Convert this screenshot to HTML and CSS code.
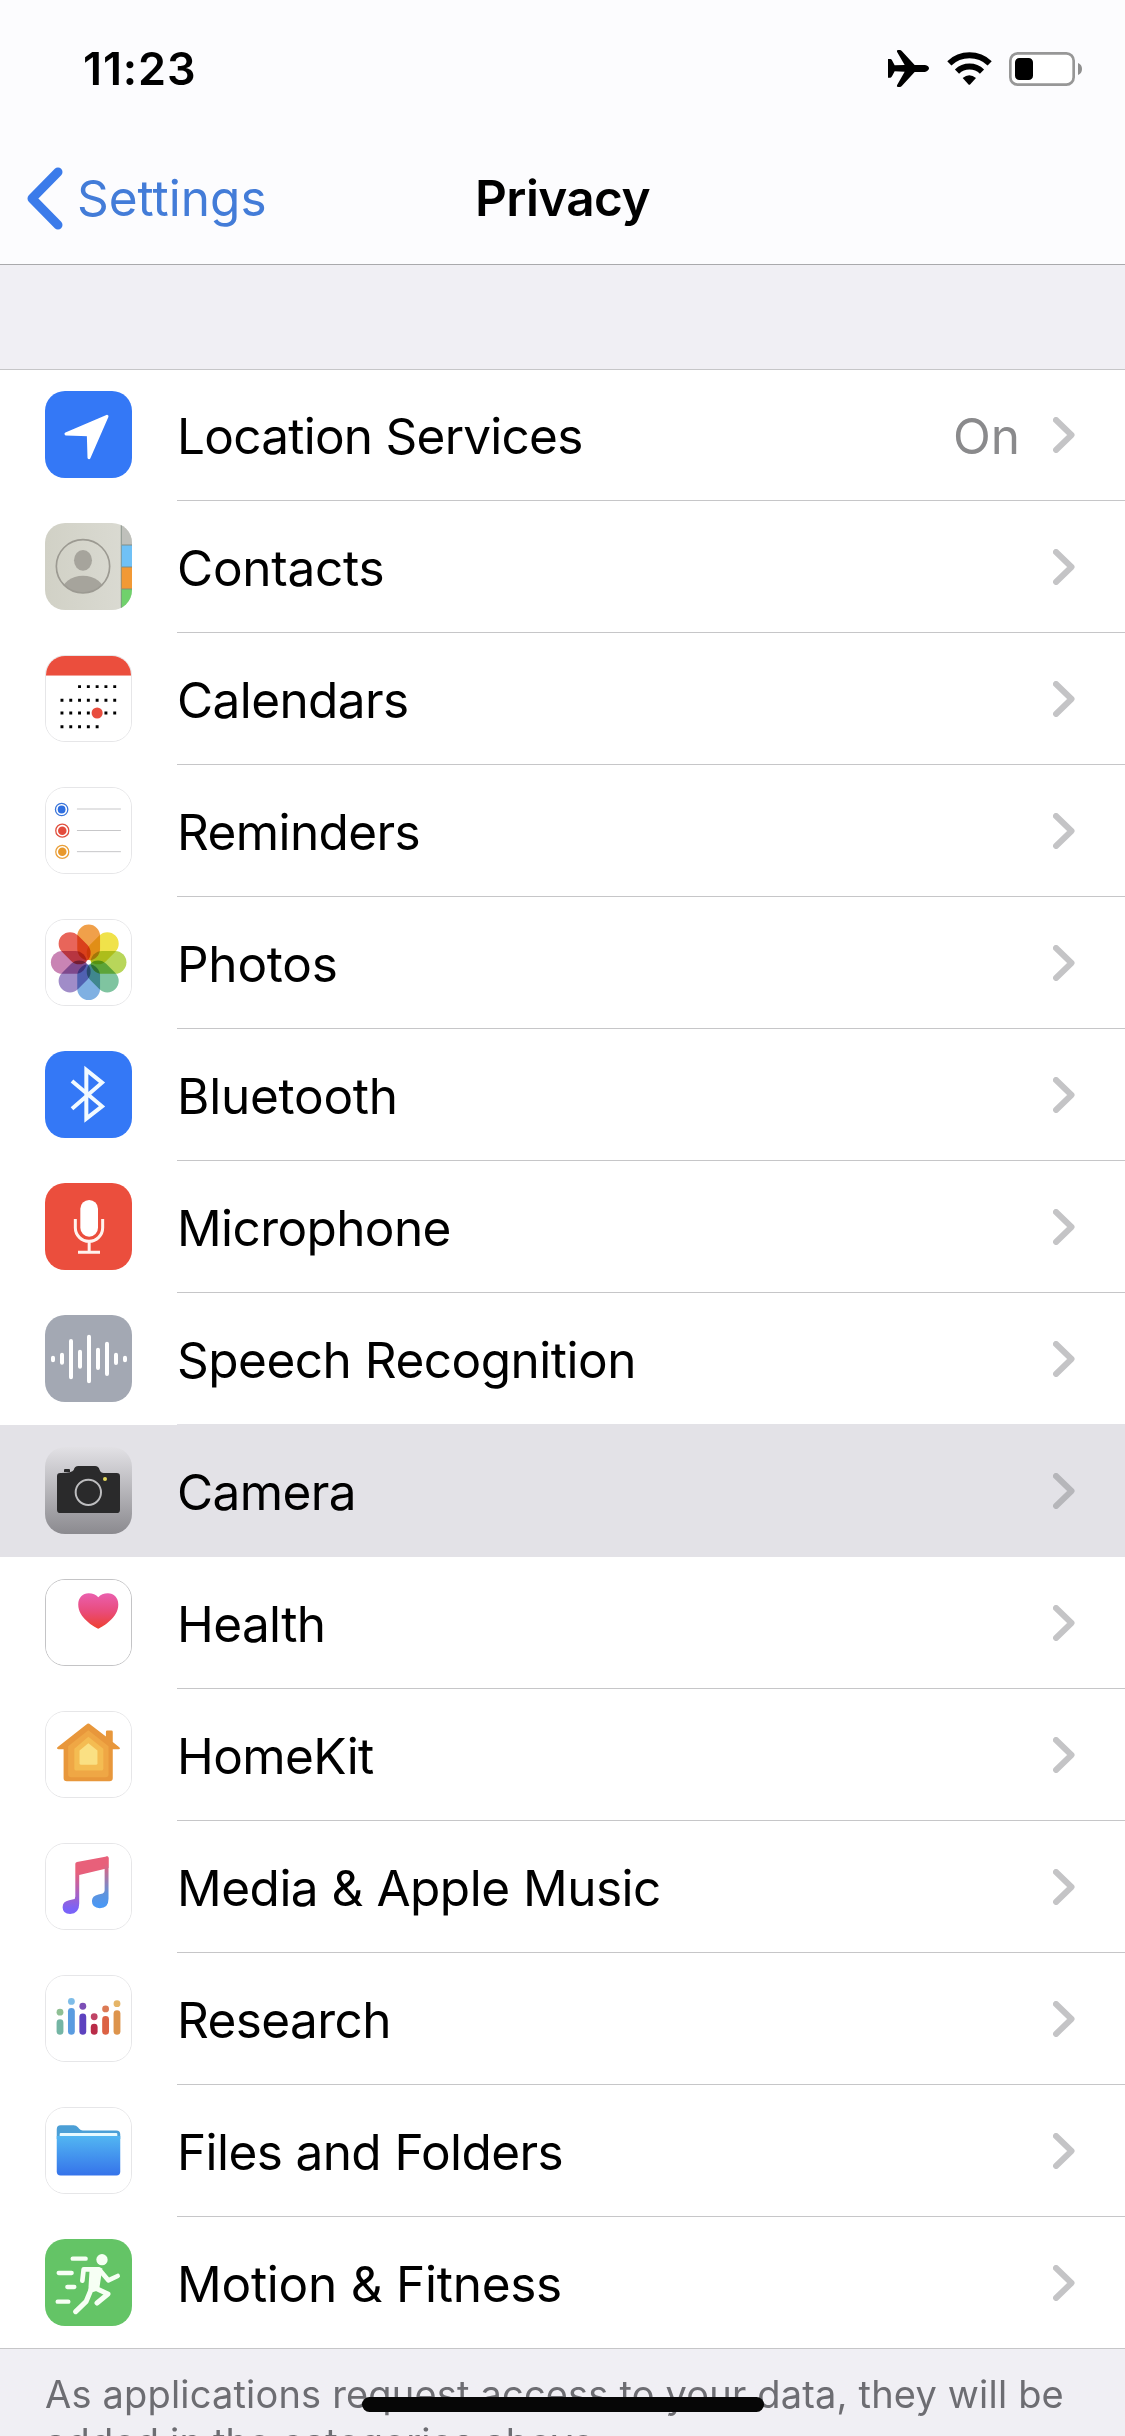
FILE: index.html
```html
<!DOCTYPE html>
<html lang="en">
<head>
  <meta charset="UTF-8">
  <meta name="viewport" content="width=device-width, initial-scale=1.0">
  <title>Privacy</title>
  <link rel="stylesheet" href="styles.css">
</head>
<body>
  <div class="screen">
    <header class="header">
      <div class="status-bar">
        <span class="status-time">11:23</span>
        <div class="status-icons">
          <svg class="airplane" viewBox="0 0 123 111">
            <path d="M0 27h7q3 0 5 4l8 15 30-1L27 5q-2-5 3-5h5q4 0 7 4l38 41h31q12 3 12 10t-12 11H80l-38 41q-3 4-7 4h-5q-5 0-3-5l23-41-30-1-8 15q-2 4-5 4H0z"/>
          </svg>
          <svg class="wifi" viewBox="0 0 135 99">
            <path class="wifi-arc" d="M7 34a88 88 0 0 1 121 0M30 59a54 54 0 0 1 75 0"/>
            <path d="M47 78q20-17 40 0L70 97q-3 3-6 0z"/>
          </svg>
          <svg class="battery" viewBox="0 0 219 102">
            <rect x="4" y="4" width="190" height="94" rx="22" fill="#fff" stroke="#979797" stroke-width="8"/>
            <rect x="18" y="18" width="54" height="66" rx="13"/>
            <path d="M207 33q12 5 12 18t-12 18z" fill="#8f8f8f"/>
          </svg>
        </div>
      </div>
      <nav class="nav-bar">
        <a class="back">
          <svg class="back-arrow" viewBox="0 0 37 63"><path d="M32 5L6 31.500L32 58"/></svg>
          <span class="back-label">Settings</span>
        </a>
        <h1 class="nav-title">Privacy</h1>
      </nav>
    </header>

    <main class="list">
      <div class="row">
        <svg class="icon" viewBox="0 0 261 261">
          <rect width="261" height="261" fill="#3478f6"/>
          <path d="M186 76L63 129 130 131.500 132 200z" fill="#fff" stroke="#fff" stroke-width="9" stroke-linejoin="round"/>
        </svg>
        <div class="cell"><span class="label label-tight">Location Services</span><span class="value">On</span><svg class="chevron" viewBox="0 0 22 36"><path d="M3 3L18.500 18L3 33"/></svg></div>
      </div>

      <div class="row">
        <svg class="icon" viewBox="0 0 261 261">
          <defs>
            <linearGradient id="paper" x1="0" y1="0" x2="1" y2="0"><stop offset="0" stop-color="#d1d1c6"/><stop offset="1" stop-color="#dbdbd3"/></linearGradient>
            <clipPath id="face"><circle cx="114" cy="130" r="80"/></clipPath>
          </defs>
          <rect width="261" height="261" fill="url(#paper)"/>
          <rect x="228" width="33" height="66" fill="#bfc0bb"/>
          <rect x="228" y="66" width="33" height="66" fill="#70c1f6"/>
          <rect x="228" y="132" width="33" height="66" fill="#f29935"/>
          <rect x="228" y="198" width="33" height="63" fill="#70d16c"/>
          <path d="M228 66h33M228 132h33M228 198h33M229 0v261" stroke="#7d8a80" stroke-opacity=".6" stroke-width="4"/>
          <g fill="#a6a49c">
            <ellipse cx="114" cy="112" rx="27" ry="31"/>
            <ellipse cx="114" cy="207" rx="64" ry="49" clip-path="url(#face)"/>
          </g>
          <circle cx="114" cy="130" r="80" fill="none" stroke="#9c9a92" stroke-width="5"/>
        </svg>
        <div class="cell"><span class="label label-wide">Contacts</span><svg class="chevron" viewBox="0 0 22 36"><path d="M3 3L18.500 18L3 33"/></svg></div>
      </div>

      <div class="row">
        <svg class="icon icon-light" viewBox="0 0 261 261">
          <rect width="261" height="261" fill="#fff"/>
          <rect width="261" height="60" fill="#eb4e3d"/>
          <path d="M98.500 94H216M44.500 136H216M44.500 175H216M44.500 217H162" stroke="#000" stroke-width="9" stroke-dasharray="9 18"/>
          <circle cx="157" cy="175" r="17" fill="#e84d3e"/>
        </svg>
        <div class="cell"><span class="label">Calendars</span><svg class="chevron" viewBox="0 0 22 36"><path d="M3 3L18.500 18L3 33"/></svg></div>
      </div>

      <div class="row">
        <svg class="icon icon-light" viewBox="0 0 261 261">
          <rect width="261" height="261" fill="#fff"/>
          <g fill="none" stroke-width="4">
            <circle cx="48" cy="66" r="19" stroke="#3a74d8"/>
            <circle cx="50" cy="131" r="20" stroke="#e0503f"/>
            <circle cx="50" cy="196" r="20" stroke="#e9a03a"/>
          </g>
          <circle cx="48" cy="66" r="12" fill="#2f6fe0"/>
          <circle cx="50" cy="131" r="13" fill="#e34b3c"/>
          <circle cx="50" cy="196" r="13" fill="#e8982c"/>
          <path d="M95 64.500h135M95 130.500h135M95 195.500h135" stroke="#c6c6c8" stroke-width="3"/>
        </svg>
        <div class="cell"><span class="label">Reminders</span><svg class="chevron" viewBox="0 0 22 36"><path d="M3 3L18.500 18L3 33"/></svg></div>
      </div>

      <div class="row">
        <svg class="icon icon-light" viewBox="0 0 261 261">
          <rect width="261" height="261" fill="#fff"/>
          <g class="petals" transform="translate(131 130)">
            <rect x="-35" y="-116" width="70" height="110" rx="35" fill="#f0a04a"/>
            <rect x="-35" y="-116" width="70" height="110" rx="35" fill="#f0e24a" transform="rotate(45)"/>
            <rect x="-35" y="-116" width="70" height="110" rx="35" fill="#b8d65a" transform="rotate(90)"/>
            <rect x="-35" y="-116" width="70" height="110" rx="35" fill="#7fc4a0" transform="rotate(135)"/>
            <rect x="-35" y="-116" width="70" height="110" rx="35" fill="#7fb0e2" transform="rotate(180)"/>
            <rect x="-35" y="-116" width="70" height="110" rx="35" fill="#a08cc8" transform="rotate(225)"/>
            <rect x="-35" y="-116" width="70" height="110" rx="35" fill="#c984b4" transform="rotate(270)"/>
            <rect x="-35" y="-116" width="70" height="110" rx="35" fill="#e8655a" transform="rotate(315)"/>
          </g>
          <circle cx="131" cy="130" r="7" fill="#fff"/>
        </svg>
        <div class="cell"><span class="label label-wide">Photos</span><svg class="chevron" viewBox="0 0 22 36"><path d="M3 3L18.500 18L3 33"/></svg></div>
      </div>

      <div class="row">
        <svg class="icon" viewBox="0 0 261 261">
          <rect width="261" height="261" fill="#3478f6"/>
          <path d="M81 90L171 166 124 203V57L171 95 81 173" fill="none" stroke="#f2faff" stroke-width="12"/>
        </svg>
        <div class="cell"><span class="label label-wide">Bluetooth</span><svg class="chevron" viewBox="0 0 22 36"><path d="M3 3L18.500 18L3 33"/></svg></div>
      </div>

      <div class="row">
        <svg class="icon" viewBox="0 0 261 261">
          <rect width="261" height="261" fill="#eb4e3d"/>
          <rect x="106" y="51" width="53" height="110" rx="26.500" fill="#fff"/>
          <path d="M91 108v26a41 41 0 0 0 82 0v-26M132.500 175v33M99 208h66" fill="none" stroke="#fff3ee" stroke-width="9"/>
        </svg>
        <div class="cell"><span class="label">Microphone</span><svg class="chevron" viewBox="0 0 22 36"><path d="M3 3L18.500 18L3 33"/></svg></div>
      </div>

      <div class="row">
        <svg class="icon" viewBox="0 0 261 261">
          <rect width="261" height="261" fill="#a3a8b3"/>
          <path d="M24 128v8M51 119v24M78 78v109M105 110v45M132 65v134M159 104v55M186 86v91M213 119v25M240 128v8" stroke="#fff" stroke-width="12" stroke-linecap="round"/>
        </svg>
        <div class="cell"><span class="label label-long">Speech Recognition</span><svg class="chevron" viewBox="0 0 22 36"><path d="M3 3L18.500 18L3 33"/></svg></div>
      </div>

      <div class="row row-active">
        <svg class="icon" viewBox="0 0 261 261">
          <defs>
            <linearGradient id="steel" x1="0" y1="0" x2="0" y2="1"><stop offset="0" stop-color="#e2e1e5"/><stop offset="1" stop-color="#8b8a8f"/></linearGradient>
          </defs>
          <rect width="261" height="261" fill="url(#steel)"/>
          <path d="M46 78h2q34 0 38-9 3-12 14-12h50q11 0 14 12 3 9 12 9h39q10 0 10 10v100q0 10-10 10H46q-10 0-10-10V88q0-10 10-10z" fill="#2a2a2b"/>
          <path d="M57 75v-6q0-3 3-3h12q3 0 3 3v6z" fill="#2a2a2b"/>
          <circle cx="130" cy="136" r="38" fill="none" stroke="#bdbdbf" stroke-width="6"/>
          <circle cx="180" cy="96" r="6" fill="#e6d85c"/>
        </svg>
        <div class="cell"><span class="label">Camera</span><svg class="chevron" viewBox="0 0 22 36"><path d="M3 3L18.500 18L3 33"/></svg></div>
      </div>

      <div class="row">
        <svg class="icon icon-outlined" viewBox="0 0 261 261">
          <defs>
            <linearGradient id="heart" x1="0" y1="0" x2="0" y2="1"><stop offset="0" stop-color="#ea5fae"/><stop offset=".5" stop-color="#e94c7c"/><stop offset="1" stop-color="#ee4030"/></linearGradient>
          </defs>
          <rect width="261" height="261" fill="#fff"/>
          <path d="M160.500 150C145 141 99 116 99 75c0-20 14-34 32-34 12 0 23 4 29.500 12C167 45 178 41 190 41c18 0 32 14 32 34 0 41-46 66-61.500 75z" fill="url(#heart)"/>
        </svg>
        <div class="cell"><span class="label">Health</span><svg class="chevron" viewBox="0 0 22 36"><path d="M3 3L18.500 18L3 33"/></svg></div>
      </div>

      <div class="row">
        <svg class="icon icon-light" viewBox="0 0 261 261">
          <rect width="261" height="261" fill="#fff"/>
          <path d="M35 108L124 38q6-5 12 0l48 37V61q0-4 4-4h13q4 0 4 4v31l20 16q5 6-2 6h-18v89q0 10-10 10H64q-10 0-10-10v-89H38q-7 0-3-6z" fill="#e8973b"/>
          <path d="M130 56l62 49v86q0 9-9 9H77q-9 0-9-9v-86z" fill="#efa745"/>
          <path d="M130 76l46 37v61q0 6-6 6H93q-6 0-6-6v-61z" fill="#f4bc52"/>
          <path d="M130 96l28 22v39q0 5-5 5h-45q-5 0-5-5v-39z" fill="#fae083"/>
        </svg>
        <div class="cell"><span class="label">HomeKit</span><svg class="chevron" viewBox="0 0 22 36"><path d="M3 3L18.500 18L3 33"/></svg></div>
      </div>

      <div class="row">
        <svg class="icon icon-light" viewBox="0 0 261 261">
          <defs>
            <linearGradient id="note-left" x1="0" y1="38" x2="0" y2="200" gradientUnits="userSpaceOnUse"><stop offset=".3" stop-color="#e8607a"/><stop offset="1" stop-color="#7a63f8"/></linearGradient>
            <linearGradient id="note-right" x1="0" y1="38" x2="0" y2="190" gradientUnits="userSpaceOnUse"><stop offset=".15" stop-color="#e8607a"/><stop offset=".75" stop-color="#5f93dc"/><stop offset="1" stop-color="#4a98f5"/></linearGradient>
          </defs>
          <rect width="261" height="261" fill="#fff"/>
          <path d="M90 61q0-5 5-6l91-17q6-1 6 5v31L102 95v88q0 31-28 32-23-1-23-21 0-17 20-21l13-3q6-1 6-9z" fill="url(#note-left)"/>
          <path d="M180 41l7-3q5 0 5 5v125q0 29-27 29-24-1-24-21 0-17 20-21l13-3q6-2 6-9z" fill="url(#note-right)"/>
        </svg>
        <div class="cell"><span class="label label-long">Media &amp; Apple Music</span><svg class="chevron" viewBox="0 0 22 36"><path d="M3 3L18.500 18L3 33"/></svg></div>
      </div>

      <div class="row">
        <svg class="icon icon-light" viewBox="0 0 261 261">
          <rect width="261" height="261" fill="#fff"/>
          <g stroke-width="21" stroke-linecap="round">
            <path d="M43 143.500V170" stroke="#74b5a4"/>
            <path d="M78 108.500V170" stroke="#5a9ce0"/>
            <path d="M113 125.500V170" stroke="#5d42bf"/>
            <path d="M148 157.500V170" stroke="#b92c48"/>
            <path d="M183 133.500V170" stroke="#dc6244"/>
            <path d="M218 115.500V170" stroke="#dd944c"/>
          </g>
          <circle cx="43" cy="111" r="10.500" fill="#8fbf94"/>
          <circle cx="78" cy="78" r="10.500" fill="#7fbde8"/>
          <circle cx="113" cy="93" r="10.500" fill="#7c4fb6"/>
          <circle cx="148" cy="125" r="10.500" fill="#c04466"/>
          <circle cx="183" cy="101" r="10.500" fill="#dc7a55"/>
          <circle cx="218" cy="85" r="10.500" fill="#e5b568"/>
        </svg>
        <div class="cell"><span class="label">Research</span><svg class="chevron" viewBox="0 0 22 36"><path d="M3 3L18.500 18L3 33"/></svg></div>
      </div>

      <div class="row">
        <svg class="icon icon-light" viewBox="0 0 261 261">
          <defs>
            <linearGradient id="folder" x1="0" y1="0" x2="0" y2="1"><stop offset="0" stop-color="#52b6f2"/><stop offset="1" stop-color="#3573ea"/></linearGradient>
          </defs>
          <rect width="261" height="261" fill="#fff"/>
          <path d="M33 95V65q0-12 12-12h40q8 0 13 6l4 5q4 5 11 5h103q12 0 12 12v14z" fill="#4b9fd6"/>
          <rect x="42" y="77" width="177" height="14" rx="3" fill="#e6f9ff"/>
          <path d="M33 86h195v109q0 12-12 12H45q-12 0-12-12z" fill="url(#folder)"/>
        </svg>
        <div class="cell"><span class="label">Files and Folders</span><svg class="chevron" viewBox="0 0 22 36"><path d="M3 3L18.500 18L3 33"/></svg></div>
      </div>

      <div class="row">
        <svg class="icon" viewBox="0 0 261 261">
          <rect width="261" height="261" fill="#64c466"/>
          <g fill="none" stroke="#f6fff4" stroke-linecap="round" stroke-linejoin="round">
            <path d="M83 59h39M41 102h39M67 144h21M38 188h32" stroke-width="13"/>
            <path d="M112 125l4-34h46l28 33 28-13" stroke-width="14"/>
            <path d="M138 152l-15 36-31 30M146 145l43 20-33 27" stroke-width="15"/>
          </g>
          <path d="M134 88l38 0-9 60q-14 18-33 6z" fill="#f6fff4"/>
          <circle cx="171" cy="62" r="17" fill="#f6fff4"/>
        </svg>
        <div class="cell"><span class="label label-wide">Motion &amp; Fitness</span><svg class="chevron" viewBox="0 0 22 36"><path d="M3 3L18.500 18L3 33"/></svg></div>
      </div>
    </main>

    <p class="footnote">As applications request access to your data, they will be<br>added in the categories above.</p>
    <div class="home-indicator"></div>
  </div>
</body>
</html>
```

FILE: styles.css
```css
:root {
  --blue: #3478f6;
  --bg: #f0eff4;
  --bg-header: #fcfcfe;
  --bg-active: #e3e2e7;
  --separator: #c6c6c8;
  --text-secondary: #8a8a8c;
  --text-footnote: #6d6d72;
}

* {
  margin: 0;
  padding: 0;
  box-sizing: border-box;
}

body {
  background: var(--bg);
  color: #000;
  font-family: Inter, "Liberation Sans", sans-serif;
  font-size: 49.5px;
}

.screen {
  position: relative;
  width: 1125px;
  height: 2436px;
  overflow: hidden;
}

.header {
  height: 265px;
  background: var(--bg-header);
  border-bottom: 1px solid #a9a9ac;
}

.status-bar {
  height: 132px;
  padding: 5px 43px 0 83px;
  display: flex;
  align-items: center;
  justify-content: space-between;
}

.status-time {
  font-size: 45px;
  font-weight: 600;
  letter-spacing: 0.9px;
}

.status-icons {
  display: flex;
  align-items: center;
}

.airplane {
  width: 41px;
  height: 37px;
  margin-right: 18px;
}

.wifi {
  width: 45px;
  height: 33px;
  margin-right: 17px;
}

.wifi-arc {
  fill: none;
  stroke: #000;
  stroke-width: 18;
}

.battery {
  width: 73px;
  height: 34px;
}

.nav-bar {
  height: 132px;
  padding: 0 26px;
  display: grid;
  grid-template-columns: 1fr auto 1fr;
  align-items: center;
}

.back {
  display: flex;
  align-items: center;
  color: #437cd8;
}

.back-arrow {
  width: 37px;
  height: 63px;
  margin-right: 14px;
  fill: none;
  stroke: #3b7bea;
  stroke-width: 9;
  stroke-linecap: round;
  stroke-linejoin: round;
}

.nav-title {
  font-size: 49.5px;
  font-weight: 600;
  letter-spacing: -0.6px;
}

.list {
  margin-top: 104px;
  background: #fff;
  box-shadow: inset 0 1px 0 var(--separator);
}

.row {
  height: 132px;
  padding-left: 45px;
  display: flex;
  align-items: center;
}

.icon {
  width: 87px;
  height: 87px;
  margin: 0 45px 1px 0;
  border-radius: 20px;
  flex-shrink: 0;
}

.icon-light {
  border: 1px solid #e6e6e8;
}

.icon-outlined {
  border: 1px solid #c4c4c6;
}

.petals rect {
  mix-blend-mode: multiply;
}

.cell {
  flex: 1;
  height: 132px;
  padding-right: 50px;
  display: flex;
  align-items: center;
  border-bottom: 1px solid var(--separator);
}

.row:last-child {
  border-bottom: 1px solid var(--separator);
}

.row:last-child .cell {
  border-bottom: none;
}

.row-active {
  background: var(--bg-active);
}

.row-active .cell,
.row:has(+ .row-active) .cell {
  border-color: var(--bg-active);
}

.label {
  flex: 1;
  padding-top: 2px;
  letter-spacing: -0.6px;
  white-space: nowrap;
}

.label-tight {
  letter-spacing: -0.75px;
}

.label-long {
  letter-spacing: -0.5px;
}

.label-wide {
  letter-spacing: -0.25px;
}

.value {
  padding-top: 2px;
  margin-right: 33px;
  color: var(--text-secondary);
}

.chevron {
  width: 22px;
  height: 36px;
  fill: none;
  stroke: #c4c4c6;
  stroke-width: 6;
  stroke-linecap: round;
  stroke-linejoin: round;
}

.row-active .chevron {
  stroke: #b6b6ba;
}

.footnote {
  padding: 21px 45px 0;
  color: var(--text-footnote);
  font-size: 38px;
  line-height: 48px;
  letter-spacing: 0.18px;
  white-space: nowrap;
}

.home-indicator {
  position: absolute;
  left: 362px;
  bottom: 24px;
  width: 402px;
  height: 15px;
  border-radius: 8px;
  background: #060606;
}
```
